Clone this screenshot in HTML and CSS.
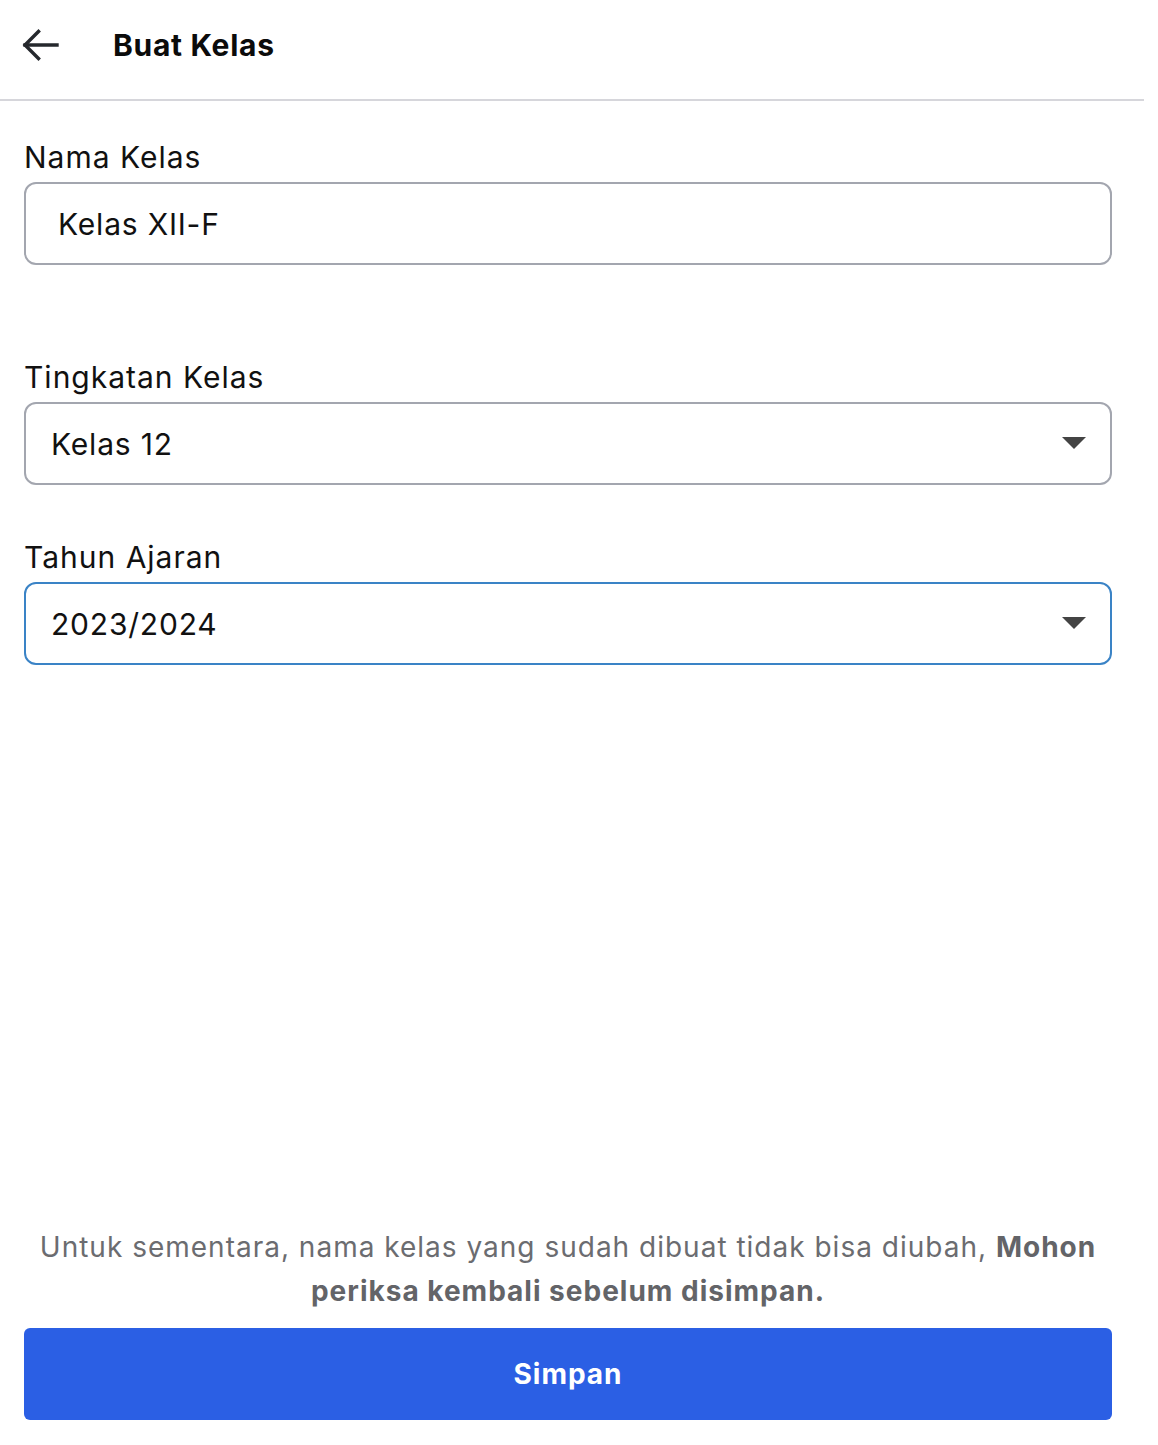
FILE: index.html
```html
<!DOCTYPE html>
<html lang="id">
<head>
    <meta charset="UTF-8">
    <meta name="viewport" content="width=device-width, initial-scale=1.0">
    <title>Buat Kelas</title>
    <link rel="stylesheet" href="styles.css">
</head>
<body>
    <div class="page">
        <header class="topbar">
            <button class="back-btn" aria-label="Kembali">
                <svg width="40" height="40" viewBox="0 0 40 40" fill="none" stroke="#25282d" stroke-width="3.4" stroke-linecap="square" stroke-linejoin="miter">
                    <path d="M37 20H5"/>
                    <path d="M18.5 6.5L5 20l13.5 13.5"/>
                </svg>
            </button>
            <h1 class="title">Buat Kelas</h1>
        </header>

        <main class="form">
            <div class="field field-name">
                <label for="namaKelas">Nama Kelas</label>
                <input type="text" id="namaKelas" class="text-input" value="Kelas XII-F">
            </div>

            <div class="field">
                <label for="tingkatan">Tingkatan Kelas</label>
                <div class="select-wrap">
                    <select id="tingkatan" class="select">
                        <option>Kelas 10</option>
                        <option>Kelas 11</option>
                        <option selected>Kelas 12</option>
                    </select>
                    <svg class="caret" width="24" height="12" viewBox="0 0 24 12"><path d="M0 0h24L12 12z" fill="#444"/></svg>
                </div>
            </div>

            <div class="field">
                <label for="tahun">Tahun Ajaran</label>
                <div class="select-wrap">
                    <select id="tahun" class="select select-active">
                        <option>2022/2023</option>
                        <option selected>2023/2024</option>
                    </select>
                    <svg class="caret" width="24" height="12" viewBox="0 0 24 12"><path d="M0 0h24L12 12z" fill="#444"/></svg>
                </div>
            </div>
        </main>

        <footer class="footer">
            <p class="note">Untuk sementara, nama kelas yang sudah dibuat tidak bisa diubah, <strong>Mohon periksa kembali sebelum disimpan.</strong></p>
            <button class="btn-save">Simpan</button>
        </footer>
    </div>
</body>
</html>
```

FILE: styles.css
```css
* {
    box-sizing: border-box;
}

body {
    margin: 0;
    font-family: Inter, "Noto Sans", sans-serif;
    background-color: #fff;
    color: #111;
}

.page {
    width: 1144px;
    min-height: 100vh;
    display: flex;
    flex-direction: column;
}

/* header */
.topbar {
    height: 101px;
    display: flex;
    align-items: center;
    padding: 0 0 10px 20px;
    border-bottom: 2px solid #d6d6db;
}

.back-btn {
    width: 40px;
    height: 40px;
    padding: 0;
    border: none;
    background: none;
    display: flex;
    cursor: pointer;
}

.title {
    margin: 0 0 0 53px;
    font-size: 30px;
    font-weight: 700;
    letter-spacing: 0.7px;
    color: #0b0b0b;
}

/* form */
.form {
    padding: 38px 32px 0 24px;
}

.field {
    display: flex;
    flex-direction: column;
    margin-bottom: 54px;
}

.field-name {
    margin-bottom: 94px;
}

.field label {
    font-size: 30px;
    line-height: 36px;
    letter-spacing: 1px;
    color: #111;
    margin-bottom: 7px;
}

.text-input,
.select {
    width: 100%;
    height: 83px;
    border: 2px solid #a3a6af;
    border-radius: 12px;
    font-family: inherit;
    font-size: 30px;
    letter-spacing: 0.8px;
    color: #111;
    background-color: #fff;
    outline: none;
}

.text-input {
    padding: 0 32px;
}

.select-wrap {
    position: relative;
}

.select {
    appearance: none;
    -webkit-appearance: none;
    padding: 0 70px 0 25px;
}

.select-active {
    border-color: #3a83c6;
}

.caret {
    position: absolute;
    right: 26px;
    top: 35px;
    pointer-events: none;
}

/* footer */
.footer {
    margin-top: auto;
    padding: 0 32px 25px 24px;
}

.note {
    margin: 0 0 15px;
    text-align: center;
    font-size: 28px;
    line-height: 44px;
    letter-spacing: 1px;
    color: #6b6c70;
}

.note strong {
    font-weight: 700;
    color: #636468;
}

.btn-save {
    width: 100%;
    height: 92px;
    border: none;
    border-radius: 6px;
    background-color: #2b5fe4;
    color: #fff;
    font-family: inherit;
    font-size: 28px;
    font-weight: 700;
    letter-spacing: 1px;
    cursor: pointer;
}
```
